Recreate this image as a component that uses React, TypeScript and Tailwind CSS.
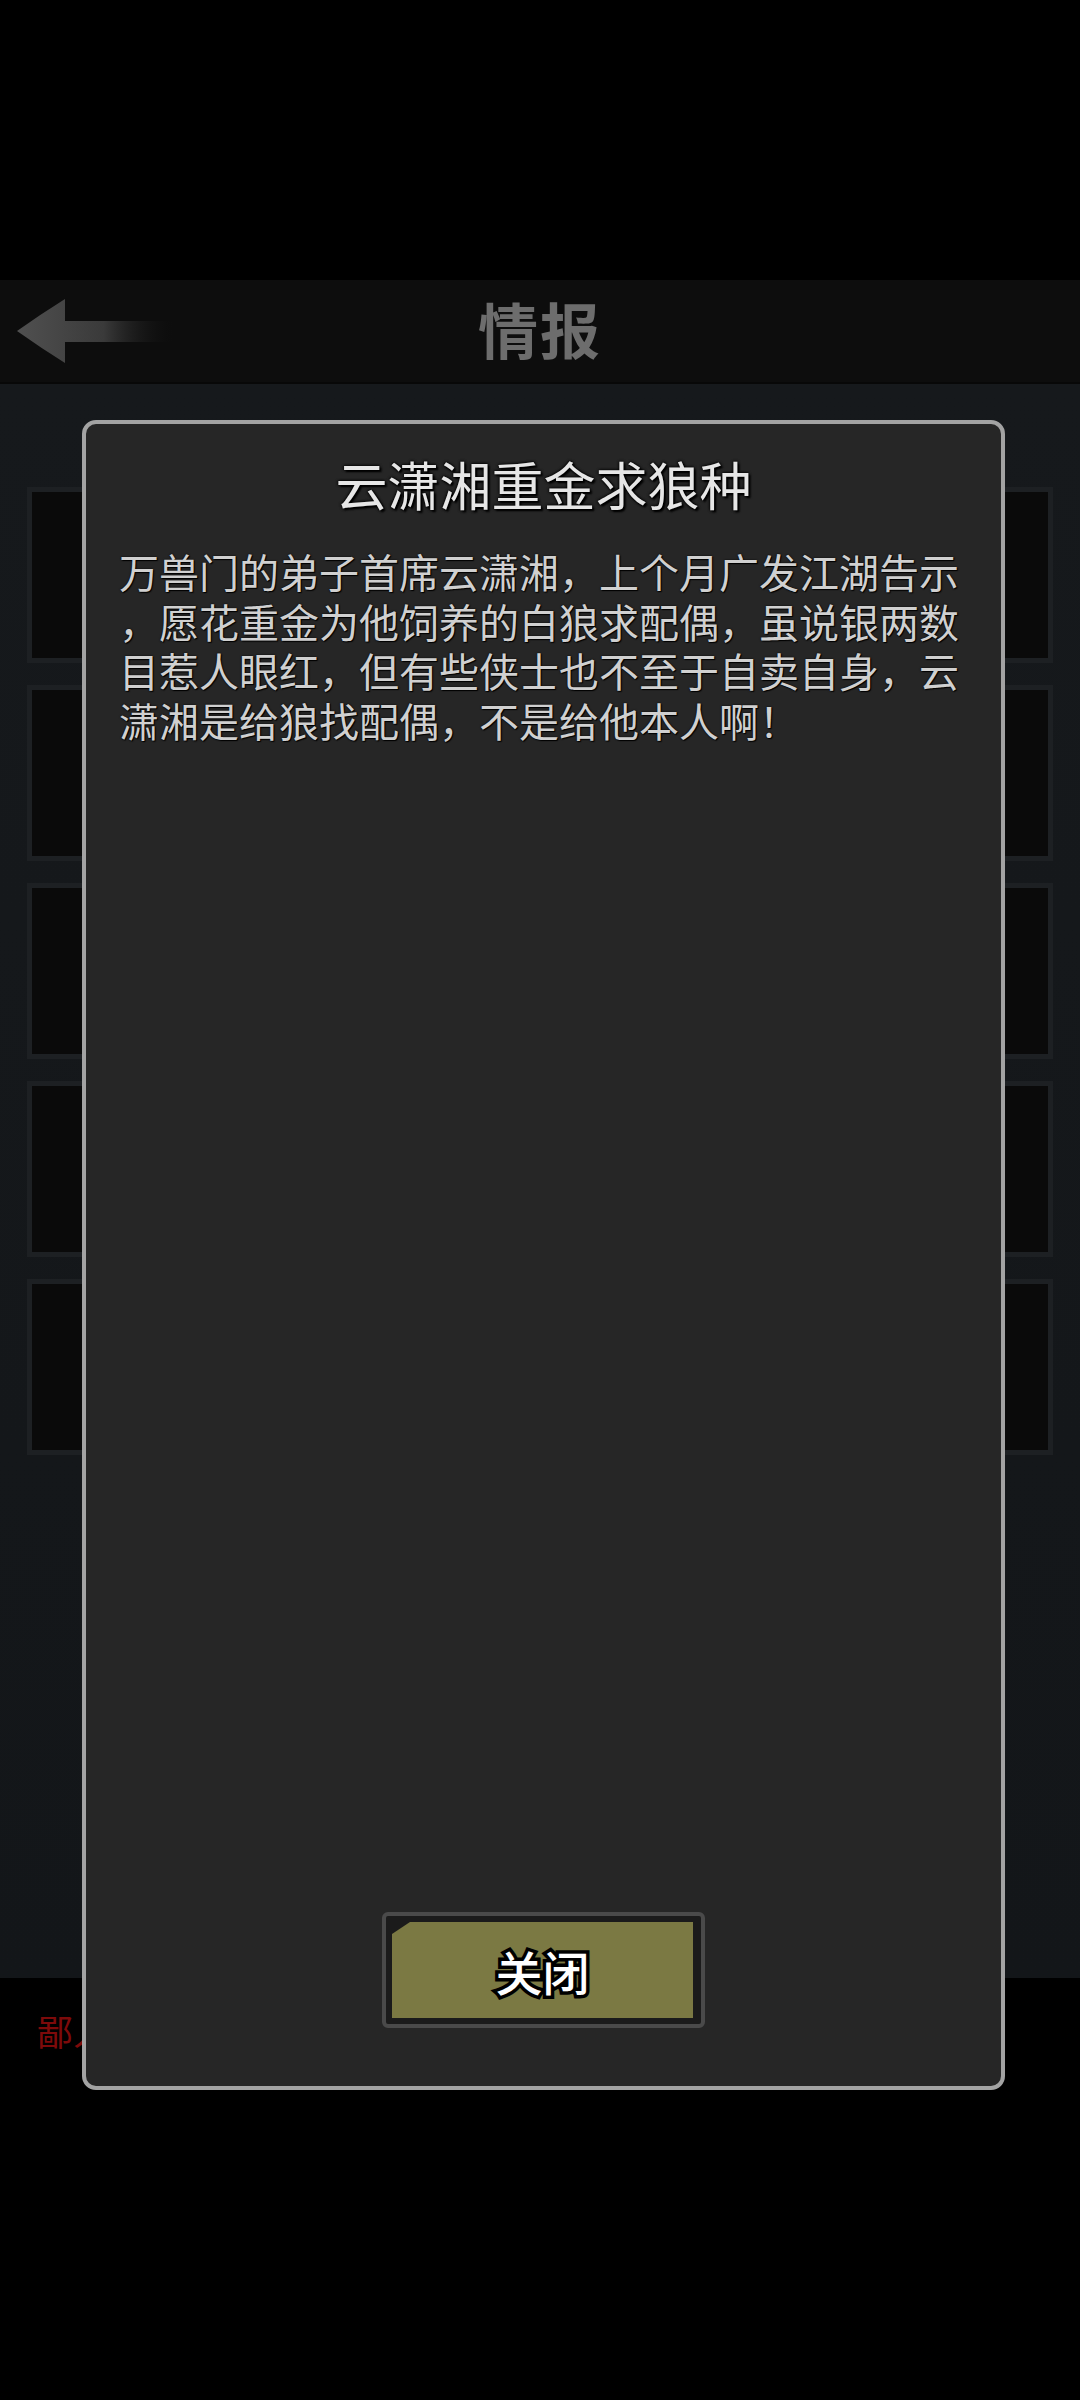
const BODY_TEXT = [
  '万兽门的弟子首席云潇湘，上个月广发江湖告示',
  '，愿花重金为他饲养的白狼求配偶，虽说银两数',
  '目惹人眼红，但有些侠士也不至于自卖自身，云',
  '潇湘是给狼找配偶，不是给他本人啊！',
].join('\n')

function BackArrow() {
  return (
    <svg width="160" height="66" viewBox="0 0 160 66" className="block">
      <defs>
        <linearGradient id="shaft" x1="0" x2="1" y1="0" y2="0">
          <stop offset="0" stopColor="#505050" />
          <stop offset="0.55" stopColor="#3a3a3a" />
          <stop offset="1" stopColor="#0e0e0e" stopOpacity="0" />
        </linearGradient>
      </defs>
      <path d="M0 33 Q24 16 48 1 L48 23 L158 23 L158 44 L48 44 L48 65 Q24 50 0 33 Z" fill="url(#shaft)" />
    </svg>
  )
}

export default function App() {
  return (
    <div className="relative w-[1080px] h-[2400px] bg-black overflow-hidden font-['Noto_Sans_CJK_SC','Noto_Sans',sans-serif]">

      {/* top spacer */}
      <div className="h-[280px]" />

      {/* Header */}
      <div className="h-[104px] bg-[#0d0d0d] flex items-center relative border-b-2 border-[#080808]">
        <div className="absolute left-[17px] top-[18px]">
          <BackArrow />
        </div>
        <div className="flex-1 text-center text-[60px] leading-none font-semibold text-[#6d6d6d] tracking-[2px] -mt-[6px]">情报</div>
      </div>

      {/* List background */}
      <div className="h-[1594px] bg-gradient-to-b from-[#16191c] to-[#131619] px-[27px] pt-[103px] flex flex-col gap-[22px]">
        {[0, 1, 2, 3, 4].map((i) => (
          <div key={i} className="h-[176px] border-[5px] border-[#1d2023] bg-[#0a0a0a]" />
        ))}
      </div>

      {/* Bottom red text */}
      <div className="pl-[37px] pt-[34px] text-[36px] leading-none text-[#7d0a0a]">鄙人</div>

      {/* Modal */}
      <div className="absolute left-[82px] top-[420px] w-[923px] h-[1670px] rounded-[14px] border-4 border-[#a3a3a3] bg-[#262626] flex flex-col">
        <div className="pt-[30px] text-center text-[52px] leading-[60px] text-[#e6e6e6] [text-shadow:0_0_3px_#000,0_0_3px_#000,2px_2px_2px_#000]">
          云潇湘重金求狼种
        </div>
        <div className="mt-[33px] px-[33px] text-[40px] leading-[49.5px] text-[#d0d0d0] [text-shadow:0_0_2px_#000,1px_1px_1px_#000] whitespace-pre-line">
          {BODY_TEXT}
        </div>

        {/* Close button */}
        <div className="mt-auto mb-[58px] mx-auto w-[323px] h-[116px] rounded-[6px] border-[4px] border-[#4a4a4a] bg-[#1b1b1b] pl-[6px] pt-[6px] pr-[8px] pb-[6px]">
          <div className="w-full h-full bg-[#7b7943] [clip-path:polygon(0_12px,18px_0,100%_0,100%_100%,0_100%)] flex items-center justify-center">
            <span className="text-[47px] leading-none font-medium text-white [-webkit-text-stroke:7px_#000] [paint-order:stroke_fill]">关闭</span>
          </div>
        </div>
      </div>

    </div>
  )
}
